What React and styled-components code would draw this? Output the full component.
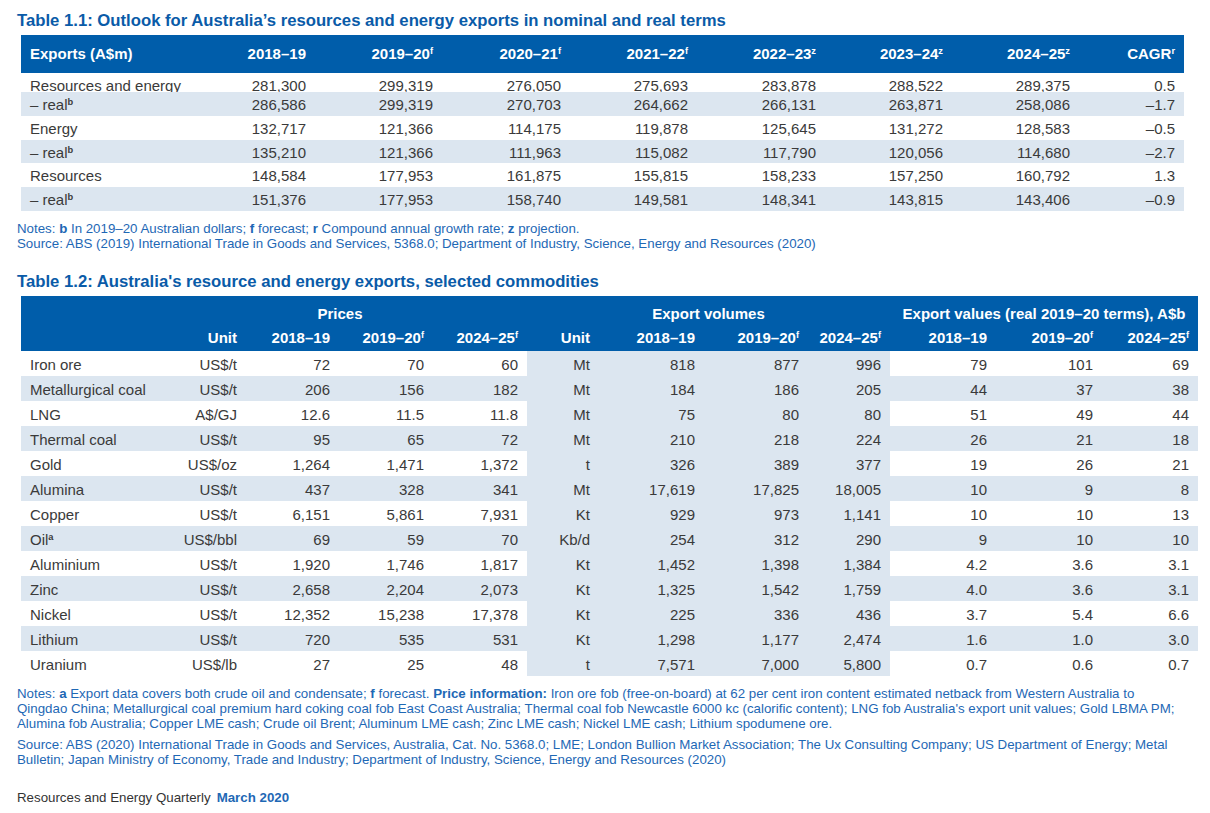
import React from 'react';
import styled, { createGlobalStyle } from 'styled-components';

const Global = createGlobalStyle`
  html, body { margin: 0; padding: 0; background: #ffffff; }
  body { font-family: "Liberation Sans", Arial, Helvetica, sans-serif; color: #3a3a3a; }
  * { box-sizing: border-box; }
`;

const BLUE = '#005daa';
const BAND = '#dce6f0';
const NOTE = '#1e68b5';

const Page = styled.div`
  width: 1210px;
  padding: 11px 0 0 17px;
`;

const Title = styled.h2`
  margin: ${(p) => p.$mt || 0}px 0 4px;
  font-size: 16.7px;
  line-height: 20px;
  font-weight: 700;
  color: #0a5ba8;
`;

const Table = styled.div`
  width: ${(p) => p.$w}px;
  margin-left: 4px;
  font-size: 15px;
`;

const HeadRow = styled.div`
  display: grid;
  grid-template-columns: ${(p) => p.$cols};
  background: ${BLUE};
  color: #ffffff;
  font-weight: 700;
  line-height: ${(p) => p.$lh}px;
  padding-top: ${(p) => p.$pt || 0}px;
  padding-bottom: ${(p) => p.$pb || 0}px;
`;

const HeadCell = styled.div`
  white-space: nowrap;
  text-align: ${(p) => (p.$left ? 'left' : p.$center ? 'center' : 'right')};
  padding: ${(p) => (p.$left ? '0 0 0 9px' : p.$center ? '0' : '0 9px 0 0')};
  grid-column: ${(p) => p.$span || 'auto'};
`;

const Row = styled.div`
  display: grid;
  grid-template-columns: ${(p) => p.$cols};
  grid-template-rows: 100%;
  height: ${(p) => p.$h}px;
  overflow: hidden;
  background: ${(p) => (p.$band ? BAND : 'transparent')};
`;

const Cell = styled.div`
  white-space: nowrap;
  text-align: ${(p) => (p.$left ? 'left' : 'right')};
  padding: ${(p) => p.$pt}px ${(p) => (p.$left ? '0' : '9px')} 0 ${(p) => (p.$left ? '9px' : '0')};
  line-height: ${(p) => p.$lh}px;
  background: ${(p) => (p.$vol ? BAND : 'transparent')};
`;

const Sup = styled.sup`
  font-size: 0.62em;
  line-height: 0;
  vertical-align: 0.5em;
  font-weight: 700;
`;

const Notes = styled.div`
  margin: ${(p) => p.$mt}px 0 0;
  color: ${NOTE};
  font-size: 13.3px;
  line-height: ${(p) => p.$lh || 15}px;
  white-space: nowrap;
`;

const Para = styled.p`
  margin: ${(p) => p.$mt || 0}px 0 0;
`;

const Footer = styled.div`
  margin-top: ${(p) => p.$mt}px;
  font-size: 13.3px;
  line-height: 15px;
  color: #333333;
`;

const FooterDate = styled.b`
  color: ${NOTE};
  margin-left: 6px;
`;

const T1_COLS = '167px 127px 127px 128px 127px 128px 127px 127px 105px';
const T2_COLS = '132px 93px 93px 94px 94px 72px 105px 104px 82px 106px 106px 96px';

const t1Head = [
  ['2018–19'],
  ['2019–20', 'f'],
  ['2020–21', 'f'],
  ['2021–22', 'f'],
  ['2022–23', 'z'],
  ['2023–24', 'z'],
  ['2024–25', 'z'],
  ['CAGR', 'r'],
];

const t1Rows = [
  ['Resources and energy', false, ['281,300', '299,319', '276,050', '275,693', '283,878', '288,522', '289,375', '0.5']],
  ['– real', true, ['286,586', '299,319', '270,703', '264,662', '266,131', '263,871', '258,086', '–1.7']],
  ['Energy', false, ['132,717', '121,366', '114,175', '119,878', '125,645', '131,272', '128,583', '–0.5']],
  ['– real', true, ['135,210', '121,366', '111,963', '115,082', '117,790', '120,056', '114,680', '–2.7']],
  ['Resources', false, ['148,584', '177,953', '161,875', '155,815', '158,233', '157,250', '160,792', '1.3']],
  ['– real', true, ['151,376', '177,953', '158,740', '149,581', '148,341', '143,815', '143,406', '–0.9']],
];

const t2Sub = [
  ['Unit'],
  ['2018–19'],
  ['2019–20', 'f'],
  ['2024–25', 'f'],
  ['Unit'],
  ['2018–19'],
  ['2019–20', 'f'],
  ['2024–25', 'f'],
  ['2018–19'],
  ['2019–20', 'f'],
  ['2024–25', 'f'],
];

const t2Rows = [
  ['Iron ore', '', 'US$/t', '72', '70', '60', 'Mt', '818', '877', '996', '79', '101', '69'],
  ['Metallurgical coal', '', 'US$/t', '206', '156', '182', 'Mt', '184', '186', '205', '44', '37', '38'],
  ['LNG', '', 'A$/GJ', '12.6', '11.5', '11.8', 'Mt', '75', '80', '80', '51', '49', '44'],
  ['Thermal coal', '', 'US$/t', '95', '65', '72', 'Mt', '210', '218', '224', '26', '21', '18'],
  ['Gold', '', 'US$/oz', '1,264', '1,471', '1,372', 't', '326', '389', '377', '19', '26', '21'],
  ['Alumina', '', 'US$/t', '437', '328', '341', 'Mt', '17,619', '17,825', '18,005', '10', '9', '8'],
  ['Copper', '', 'US$/t', '6,151', '5,861', '7,931', 'Kt', '929', '973', '1,141', '10', '10', '13'],
  ['Oil', 'a', 'US$/bbl', '69', '59', '70', 'Kb/d', '254', '312', '290', '9', '10', '10'],
  ['Aluminium', '', 'US$/t', '1,920', '1,746', '1,817', 'Kt', '1,452', '1,398', '1,384', '4.2', '3.6', '3.1'],
  ['Zinc', '', 'US$/t', '2,658', '2,204', '2,073', 'Kt', '1,325', '1,542', '1,759', '4.0', '3.6', '3.1'],
  ['Nickel', '', 'US$/t', '12,352', '15,238', '17,378', 'Kt', '225', '336', '436', '3.7', '5.4', '6.6'],
  ['Lithium', '', 'US$/t', '720', '535', '531', 'Kt', '1,298', '1,177', '2,474', '1.6', '1.0', '3.0'],
  ['Uranium', '', 'US$/lb', '27', '25', '48', 't', '7,571', '7,000', '5,800', '0.7', '0.6', '0.7'],
];

function Label({ text, sup }) {
  return (
    <>
      {text}
      {sup ? <Sup>{sup}</Sup> : null}
    </>
  );
}

function Table11() {
  return (
    <Table $w={1163}>
      <HeadRow $cols={T1_COLS} $lh={38}>
        <HeadCell $left>Exports (A$m)</HeadCell>
        {t1Head.map(([t, s], i) => (
          <HeadCell key={i}>
            <Label text={t} sup={s} />
          </HeadCell>
        ))}
      </HeadRow>
      {t1Rows.map(([name, real, vals], i) => {
        const first = i === 0;
        return (
          <Row key={i} $cols={T1_COLS} $h={first ? 19 : 23.8} $band={i % 2 === 1}>
            <Cell $left $pt={first ? 0.5 : 3} $lh={first ? 24 : 20.8}>
              <Label text={name} sup={real ? 'b' : ''} />
            </Cell>
            {vals.map((v, j) => (
              <Cell key={j} $pt={first ? 0.5 : 3} $lh={first ? 24 : 20.8}>
                {v}
              </Cell>
            ))}
          </Row>
        );
      })}
    </Table>
  );
}

function Table12() {
  return (
    <Table $w={1177}>
      <HeadRow $cols={T2_COLS} $lh={24} $pt={6}>
        <HeadCell $center $span="2 / 6">Prices</HeadCell>
        <HeadCell $center $span="6 / 10">Export volumes</HeadCell>
        <HeadCell $center $span="10 / 13">Export values (real 2019–20 terms), A$b</HeadCell>
      </HeadRow>
      <HeadRow $cols={T2_COLS} $lh={24} $pb={1}>
        <HeadCell />
        {t2Sub.map(([t, s], i) => (
          <HeadCell key={i}>
            <Label text={t} sup={s} />
          </HeadCell>
        ))}
      </HeadRow>
      {t2Rows.map(([name, sup, ...vals], i) => (
        <Row key={i} $cols={T2_COLS} $h={25} $band={i % 2 === 1}>
          <Cell $left $pt={2} $lh={23}>
            <Label text={name} sup={sup} />
          </Cell>
          {vals.map((v, j) => (
            <Cell key={j} $pt={2} $lh={23} $vol={j >= 4 && j <= 7}>
              {v}
            </Cell>
          ))}
        </Row>
      ))}
    </Table>
  );
}

export default function App() {
  return (
    <Page>
      <Global />
      <Title>Table 1.1: Outlook for Australia’s resources and energy exports in nominal and real terms</Title>
      <Table11 />
      <Notes $mt={10}>
        Notes: <b>b</b> In 2019–20 Australian dollars; <b>f</b> forecast; <b>r</b> Compound annual growth rate;{' '}
        <b>z</b> projection.
        <br />
        Source: ABS (2019) International Trade in Goods and Services, 5368.0; Department of Industry, Science, Energy and
        Resources (2020)
      </Notes>
      <Title $mt={21}>Table 1.2: Australia's resource and energy exports, selected commodities</Title>
      <Table12 />
      <Notes $mt={10} $lh={15.2}>
        <Para>
          Notes: <b>a</b> Export data covers both crude oil and condensate; <b>f</b> forecast. <b>Price information:</b>{' '}
          Iron ore fob (free-on-board) at 62 per cent iron content estimated netback from Western Australia to
          <br />
          Qingdao China; Metallurgical coal premium hard coking coal fob East Coast Australia; Thermal coal fob Newcastle
          6000 kc (calorific content); LNG fob Australia's export unit values; Gold LBMA PM;
          <br />
          Alumina fob Australia; Copper LME cash; Crude oil Brent; Aluminum LME cash; Zinc LME cash; Nickel LME cash;
          Lithium spodumene ore.
        </Para>
        <Para $mt={5}>
          Source: ABS (2020) International Trade in Goods and Services, Australia, Cat. No. 5368.0; LME; London Bullion
          Market Association; The Ux Consulting Company; US Department of Energy; Metal
          <br />
          Bulletin; Japan Ministry of Economy, Trade and Industry; Department of Industry, Science, Energy and Resources
          (2020)
        </Para>
      </Notes>
      <Footer $mt={23}>
        Resources and Energy Quarterly<FooterDate>March 2020</FooterDate>
      </Footer>
    </Page>
  );
}
